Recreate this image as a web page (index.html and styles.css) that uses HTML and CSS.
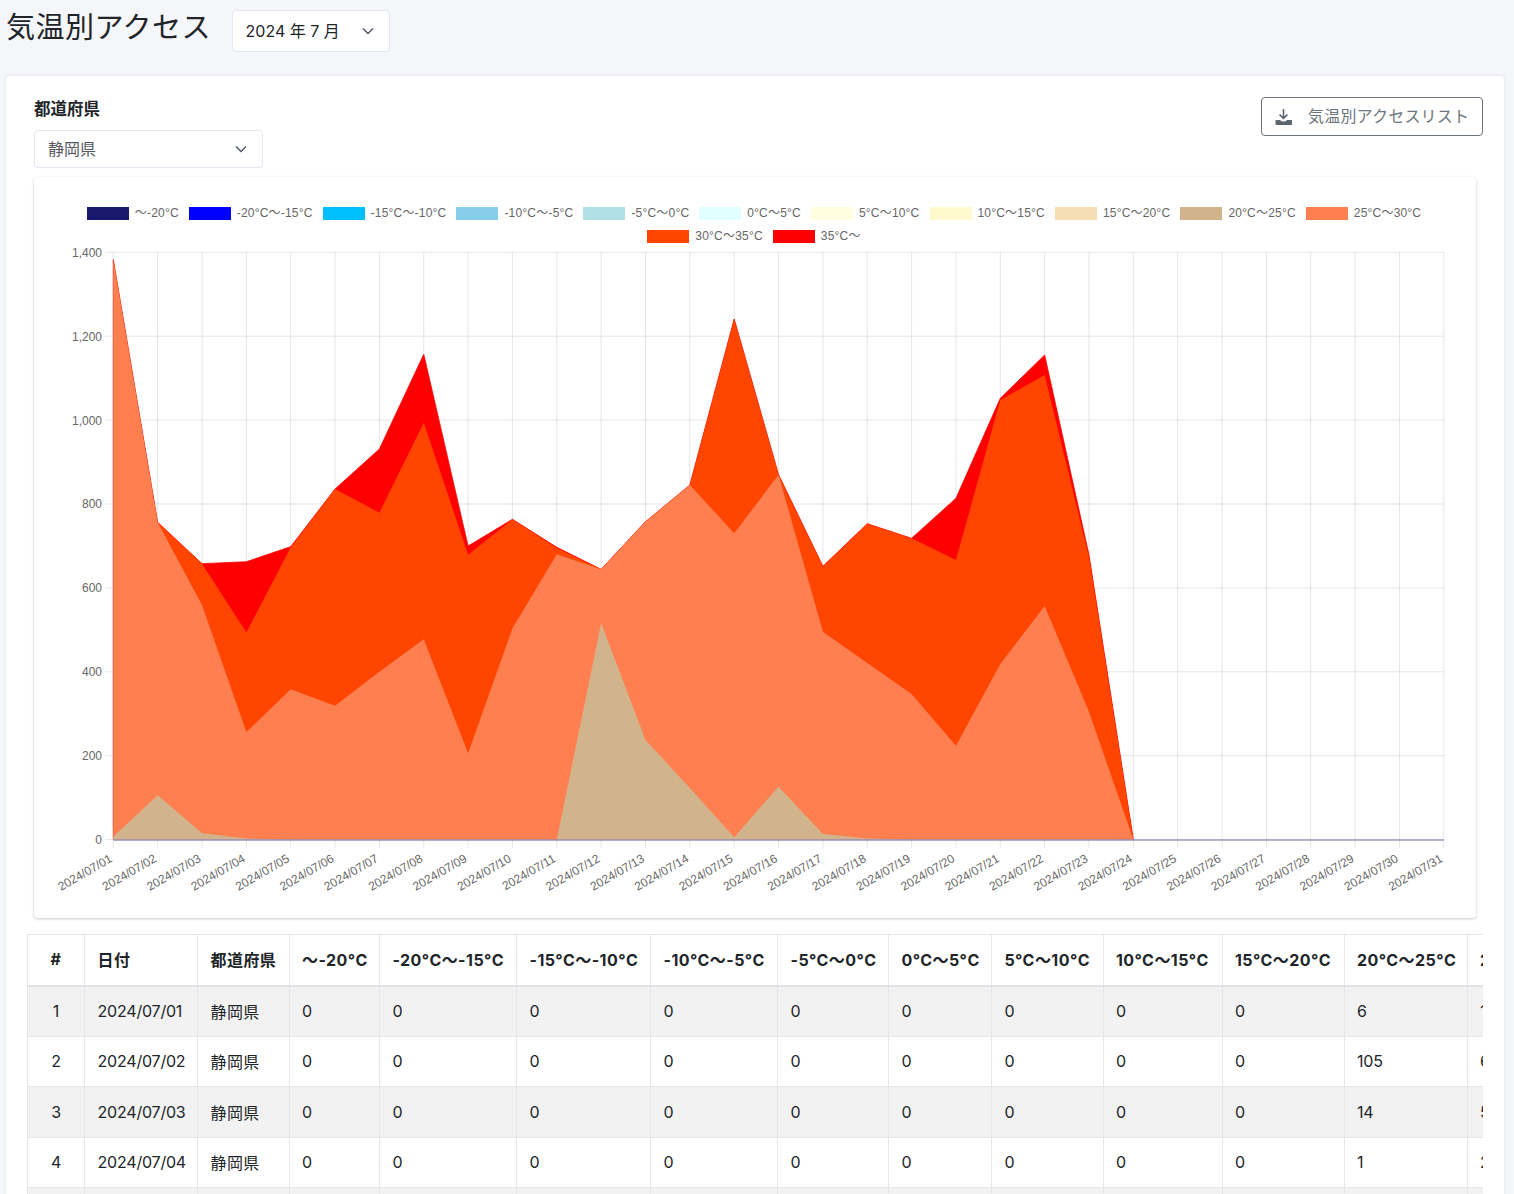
FILE: index.html
```html
<!DOCTYPE html>
<html lang="ja">
<head>
<meta charset="utf-8">
<title>気温別アクセス</title>
<link rel="stylesheet" href="styles.css">
</head>
<body>
<div class="page">
  <header class="head">
    <h1 class="title">気温別アクセス</h1>
    <div class="select select-month"><span>2024 年 7 月</span>
      <svg class="chev" viewBox="0 0 12 8"><path d="M1 1.5l5 5 5-5"/></svg>
    </div>
  </header>
  <main class="card">
    <div class="toolbar">
      <div class="field">
        <div class="label">都道府県</div>
        <div class="select select-pref"><span>静岡県</span>
          <svg class="chev" viewBox="0 0 12 8"><path d="M1 1.5l5 5 5-5"/></svg>
        </div>
      </div>
      <button class="btn">
        <svg class="dl" viewBox="0 0 16 16"><path class="dl-arrow" d="M8 1v8.5M4.3 6.2L8 9.8l3.7-3.6"/><path class="dl-tray" d="M0.5 11.2h4l2.2 1.6h2.6l2.2-1.6h3.9c.3 0 .6.3.6.6v3.4c0 .4-.3.7-.7.7H1.200c-.4 0-.7-.3-.7-.7z"/></svg>
        <span>気温別アクセスリスト</span>
      </button>
    </div>
    <section class="chart-card">
      <div class="legend">
        <div class="li"><i class="sw s1"></i>〜-20°C</div>
        <div class="li"><i class="sw s2"></i>-20°C〜-15°C</div>
        <div class="li"><i class="sw s3"></i>-15°C〜-10°C</div>
        <div class="li"><i class="sw s4"></i>-10°C〜-5°C</div>
        <div class="li"><i class="sw s5"></i>-5°C〜0°C</div>
        <div class="li"><i class="sw s6"></i>0°C〜5°C</div>
        <div class="li"><i class="sw s7"></i>5°C〜10°C</div>
        <div class="li"><i class="sw s8"></i>10°C〜15°C</div>
        <div class="li"><i class="sw s9"></i>15°C〜20°C</div>
        <div class="li"><i class="sw s10"></i>20°C〜25°C</div>
        <div class="li"><i class="sw s11"></i>25°C〜30°C</div>
        <div class="li"><i class="sw s12"></i>30°C〜35°C</div>
        <div class="li"><i class="sw s13"></i>35°C〜</div>
      </div>
      <svg class="plot" viewBox="34 245 1440 660">
        <path class="grid" d="M105 252.300H1443.800M105 336.200H1443.800M105 420.100H1443.800M105 504H1443.800M105 587.900H1443.800M105 671.800H1443.800M105 755.700H1443.800M105 839.600H1443.800"/>
        <path class="grid" d="M113.300 252.300V848M157.650 252.300V848M202 252.300V848M246.350 252.300V848M290.700 252.300V848M335.050 252.300V848M379.400 252.300V848M423.750 252.300V848M468.100 252.300V848M512.450 252.300V848M556.800 252.300V848M601.150 252.300V848M645.500 252.300V848M689.850 252.300V848M734.200 252.300V848M778.550 252.300V848M822.900 252.300V848M867.250 252.300V848M911.600 252.300V848M955.950 252.300V848M1000.300 252.300V848M1044.650 252.300V848M1089 252.300V848M1133.350 252.300V848M1177.700 252.300V848M1222.050 252.300V848M1266.400 252.300V848M1310.750 252.300V848M1355.100 252.300V848M1399.450 252.300V848M1443.800 252.300V848"/>
        <polygon class="a-red" points="113.300,839.600 113.300,259.700 157.650,522.300 202,563.700 246.350,561.700 290.700,546.700 335.050,489 379.400,449 423.750,354.300 468.100,546 512.450,519.300 556.800,547.300 601.150,569.300 645.500,521.700 689.850,485 734.200,319 778.550,474.700 822.900,566.300 867.250,523.700 911.600,538.300 955.950,498.300 1000.300,398.300 1044.650,355 1089,555 1133.350,839.600"/>
        <polygon class="a-ored" points="113.300,839.600 113.300,259.700 157.650,522.300 202,563.700 246.350,632.300 290.700,547.500 335.050,489 379.400,512.700 423.750,422.700 468.100,554.700 512.450,519.300 556.800,548 601.150,569.300 645.500,521.700 689.850,485 734.200,319 778.550,474.700 822.900,566.300 867.250,523.700 911.600,538.300 955.950,560 1000.300,400 1044.650,375 1089,557 1133.350,839.600"/>
        <polygon class="a-coral" points="113.300,839.600 113.300,259.700 157.650,522.300 202,605 246.350,732 290.700,689.300 335.050,705.700 379.400,671.700 423.750,639.300 468.100,753.300 512.450,628.300 556.800,554.300 601.150,569.300 645.500,521.700 689.850,485 734.200,533.300 778.550,474.700 822.900,631.700 867.250,663 911.600,694 955.950,745.700 1000.300,664 1044.650,606 1089,711.700 1133.350,839.600"/>
        <polygon class="a-tan" points="113.300,839.600 113.300,836.700 157.650,795.300 202,833.300 246.350,838.600 290.700,839.600 556.800,839.600 601.150,623.300 645.500,740 689.850,788 734.200,837.300 778.550,786.700 822.900,834 867.250,838.600 911.600,839.600"/>
        <path class="base" d="M113.300 840H1443.800"/>
        <g class="ylab">
          <text x="102" y="257">1,400</text>
          <text x="102" y="341">1,200</text>
          <text x="102" y="425">1,000</text>
          <text x="102" y="508">800</text>
          <text x="102" y="592">600</text>
          <text x="102" y="676">400</text>
          <text x="102" y="760">200</text>
          <text x="102" y="844">0</text>
        </g>
        <g class="xlab" transform="translate(-2 1)">
          <text transform="translate(115 860) rotate(-30)">2024/07/01</text>
          <text transform="translate(159.350 860) rotate(-30)">2024/07/02</text>
          <text transform="translate(203.700 860) rotate(-30)">2024/07/03</text>
          <text transform="translate(248.050 860) rotate(-30)">2024/07/04</text>
          <text transform="translate(292.400 860) rotate(-30)">2024/07/05</text>
          <text transform="translate(336.750 860) rotate(-30)">2024/07/06</text>
          <text transform="translate(381.100 860) rotate(-30)">2024/07/07</text>
          <text transform="translate(425.450 860) rotate(-30)">2024/07/08</text>
          <text transform="translate(469.800 860) rotate(-30)">2024/07/09</text>
          <text transform="translate(514.150 860) rotate(-30)">2024/07/10</text>
          <text transform="translate(558.500 860) rotate(-30)">2024/07/11</text>
          <text transform="translate(602.850 860) rotate(-30)">2024/07/12</text>
          <text transform="translate(647.200 860) rotate(-30)">2024/07/13</text>
          <text transform="translate(691.550 860) rotate(-30)">2024/07/14</text>
          <text transform="translate(735.900 860) rotate(-30)">2024/07/15</text>
          <text transform="translate(780.250 860) rotate(-30)">2024/07/16</text>
          <text transform="translate(824.600 860) rotate(-30)">2024/07/17</text>
          <text transform="translate(868.950 860) rotate(-30)">2024/07/18</text>
          <text transform="translate(913.300 860) rotate(-30)">2024/07/19</text>
          <text transform="translate(957.650 860) rotate(-30)">2024/07/20</text>
          <text transform="translate(1002 860) rotate(-30)">2024/07/21</text>
          <text transform="translate(1046.350 860) rotate(-30)">2024/07/22</text>
          <text transform="translate(1090.700 860) rotate(-30)">2024/07/23</text>
          <text transform="translate(1135.050 860) rotate(-30)">2024/07/24</text>
          <text transform="translate(1179.400 860) rotate(-30)">2024/07/25</text>
          <text transform="translate(1223.750 860) rotate(-30)">2024/07/26</text>
          <text transform="translate(1268.100 860) rotate(-30)">2024/07/27</text>
          <text transform="translate(1312.450 860) rotate(-30)">2024/07/28</text>
          <text transform="translate(1356.800 860) rotate(-30)">2024/07/29</text>
          <text transform="translate(1401.150 860) rotate(-30)">2024/07/30</text>
          <text transform="translate(1445.500 860) rotate(-30)">2024/07/31</text>
        </g>
      </svg>
    </section>
    <div class="table-wrap">
      <table class="data">
        <colgroup>
          <col class="c-no"><col class="c-date"><col class="c-pref"><col class="c-a"><col class="c-b"><col class="c-c"><col class="c-d"><col class="c-e"><col class="c-f"><col class="c-g"><col class="c-h"><col class="c-i"><col class="c-j"><col class="c-j">
        </colgroup>
        <thead>
          <tr><th class="num">#</th><th>日付</th><th>都道府県</th><th>〜-20°C</th><th>-20°C〜-15°C</th><th>-15°C〜-10°C</th><th>-10°C〜-5°C</th><th>-5°C〜0°C</th><th>0°C〜5°C</th><th>5°C〜10°C</th><th>10°C〜15°C</th><th>15°C〜20°C</th><th>20°C〜25°C</th><th>25°C〜30°C</th></tr>
        </thead>
        <tbody>
          <tr><td class="num">1</td><td>2024/07/01</td><td class="pref">静岡県</td><td>0</td><td>0</td><td>0</td><td>0</td><td>0</td><td>0</td><td>0</td><td>0</td><td>0</td><td>6</td><td>1376</td></tr>
          <tr><td class="num">2</td><td>2024/07/02</td><td class="pref">静岡県</td><td>0</td><td>0</td><td>0</td><td>0</td><td>0</td><td>0</td><td>0</td><td>0</td><td>0</td><td>105</td><td>651</td></tr>
          <tr><td class="num">3</td><td>2024/07/03</td><td class="pref">静岡県</td><td>0</td><td>0</td><td>0</td><td>0</td><td>0</td><td>0</td><td>0</td><td>0</td><td>0</td><td>14</td><td>545</td></tr>
          <tr><td class="num">4</td><td>2024/07/04</td><td class="pref">静岡県</td><td>0</td><td>0</td><td>0</td><td>0</td><td>0</td><td>0</td><td>0</td><td>0</td><td>0</td><td>1</td><td>255</td></tr>
          <tr><td class="num">5</td><td>2024/07/05</td><td class="pref">静岡県</td><td>0</td><td>0</td><td>0</td><td>0</td><td>0</td><td>0</td><td>0</td><td>0</td><td>0</td><td>0</td><td>358</td></tr>
        </tbody>
      </table>
    </div>
  </main>
</div>
</body>
</html>
```

FILE: styles.css
```css
* { box-sizing: border-box; }
html, body { margin: 0; padding: 0; }
body {
  background: #f4f6fa;
  color: #212529;
  font-family: Inter, "Noto Sans CJK JP", sans-serif;
  font-size: 16px;
}
.page { height: 1194px; overflow: hidden; padding-top: 10px; }
.head { display: flex; align-items: flex-start; padding-left: 6px; height: 66px; }
.title { margin: 0 20.500px 0 0; font-size: 29px; font-weight: 400; letter-spacing: .5px; line-height: 36px; color: #212529; white-space: nowrap; }
.select {
  display: flex; align-items: center; justify-content: space-between;
  background: #fff; border: 1px solid #e2e6ee; border-radius: 4px;
}
.select span { padding-bottom: 2px; }
.select-month { width: 158px; height: 42px; padding: 0 15px 0 13px; color: #212529; }
.select-pref { width: 229px; height: 38px; padding: 0 15px 0 13px; color: #55595f; }
.chev { width: 12px; height: 8px; fill: none; stroke: #4a5568; stroke-width: 1.4; }
.card {
  margin: 0 10px 0 6px; padding: 21px 21px 0;
  background: #fff; border-radius: 4px; box-shadow: 0 0 3px rgba(40, 50, 80, .12);
}
.toolbar { display: flex; justify-content: space-between; align-items: flex-start; padding-left: 7px; }
.field { display: flex; flex-direction: column; }
.label { height: 24px; line-height: 24px; margin-bottom: 9px; font-weight: 700; color: #212529; font-size: 16.500px; }
.btn {
  display: flex; align-items: center; width: 222px; height: 39px; padding: 0 13px;
  background: #fff; border: 1px solid #6c757d; border-radius: 4px; color: #6c757d;
  font: inherit; letter-spacing: .2px; white-space: nowrap;
}
.btn span { padding-bottom: 3px; }
.dl { width: 17px; height: 17px; margin-right: 16px; flex: none; }
.dl-arrow { fill: none; stroke: #5c6670; stroke-width: 1.500; }
.dl-tray { fill: #5c6670; }
.chart-card {
  margin: 9px 7px 0; height: 741px; padding-top: 30px;
  background: #fff; border-radius: 4px; box-shadow: 0 1px 3px rgba(0, 0, 0, .22);
}
.legend {
  display: flex; flex-wrap: wrap; justify-content: center; align-content: flex-start; gap: 10px;
  width: 1414px; margin-left: 13px; height: 38px;
  font-family: "Liberation Sans", "Noto Sans CJK JP", sans-serif;
  font-size: 12px; letter-spacing: .2px; line-height: 13px; color: #666;
}
.li { display: flex; align-items: center; gap: 6px; height: 13px; white-space: nowrap; }
.sw { display: block; width: 42px; height: 13px; }
.s1 { background: #191970; }
.s2 { background: #0000ff; }
.s3 { background: #00bfff; }
.s4 { background: #87ceeb; }
.s5 { background: #b0e0e6; }
.s6 { background: #e0ffff; }
.s7 { background: #ffffe0; }
.s8 { background: #fffacd; }
.s9 { background: #f5deb3; }
.s10 { background: #d2b48c; }
.s11 { background: #ff7f50; }
.s12 { background: #ff4500; }
.s13 { background: #ff0000; }
.plot { display: block; width: 1440px; height: 660px; }
.grid { fill: none; stroke: rgba(0, 0, 0, .1); stroke-width: 1; }
.a-red { fill: #ff0000; stroke: #ff0000; stroke-width: .8; }
.a-ored { fill: #ff4500; }
.a-coral { fill: #ff7f50; }
.a-tan { fill: #d2b48c; }
.base { fill: none; stroke: #9a98bf; stroke-width: 1.400; }
.ylab text, .xlab text { font-family: "Liberation Sans", sans-serif; font-size: 12px; fill: #666; text-anchor: end; }
.table-wrap { margin-top: 16px; overflow: hidden; width: 1456px; }
.data { border-collapse: collapse; table-layout: fixed; width: 1563px; }
.c-no { width: 57px; }
.c-date { width: 113px; }
.c-pref { width: 91.500px; }
.c-a { width: 90.500px; }
.c-b { width: 137px; }
.c-c { width: 134px; }
.c-d { width: 127px; }
.c-e { width: 111px; }
.c-f { width: 103px; }
.c-g { width: 111.500px; }
.c-h { width: 119px; }
.c-i { width: 122px; }
.c-j { width: 123px; }
.data th, .data td {
  height: 50.400px; padding: 0 12.500px; border: 1px solid #e4e6ea;
  text-align: left; white-space: nowrap; overflow: hidden; color: #212529;
}
.data th { height: 51.400px; padding-bottom: 2px; font-weight: 700; letter-spacing: .45px; border-bottom: 2px solid #dfe2e7; }
.data td { letter-spacing: -.2px; }
.data td.pref { letter-spacing: .4px; }
.data .num { text-align: center; }
.data tbody tr:nth-child(odd) td { background: #f2f2f2; }
```
